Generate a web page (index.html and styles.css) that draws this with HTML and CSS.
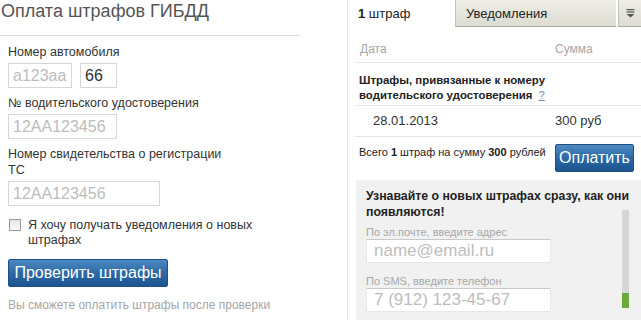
FILE: index.html
```html
<!DOCTYPE html>
<html lang="ru">
<head>
<meta charset="utf-8">
<title>Оплата штрафов ГИБДД</title>
<link rel="stylesheet" href="styles.css">
</head>
<body>
<div class="page">
  <div class="left">
    <h1 class="title">Оплата штрафов ГИБДД</h1>
    <div class="form">
      <div class="field">
        <div class="label">Номер автомобиля</div>
        <div class="inputs">
          <input class="inp inp-num" type="text" placeholder="а123аа">
          <input class="inp inp-reg" type="text" value="66">
        </div>
      </div>
      <div class="field">
        <div class="label">№ водительского удостоверения</div>
        <input class="inp inp-mid" type="text" placeholder="12АА123456">
      </div>
      <div class="field">
        <div class="label label-wrap">Номер свидетельства о регистрации ТС</div>
        <input class="inp inp-wide" type="text" placeholder="12АА123456">
      </div>
      <label class="check">
        <span class="box"></span>
        <span class="check-text">Я хочу получать уведомления о новых штрафах</span>
      </label>
      <button class="btn btn-check" type="button">Проверить штрафы</button>
      <div class="note">Вы сможете оплатить штрафы после проверки</div>
    </div>
  </div>
  <div class="right">
    <div class="tabs">
      <div class="tab tab-active"><b>1</b> штраф</div>
      <div class="tab tab-grey">Уведомления</div>
      <div class="tab tab-menu">
        <svg width="9" height="9" viewBox="0 0 9 9"><rect x="0.5" y="0" width="8" height="1.2" fill="#555"/><rect x="0.5" y="2.4" width="8" height="1.2" fill="#555"/><path d="M0.5 5 L8.5 5 L4.5 8.6 Z" fill="#555"/></svg>
      </div>
    </div>
    <div class="content">
      <div class="thead">
        <span class="c-date">Дата</span>
        <span class="c-sum">Сумма</span>
      </div>
      <div class="section">
        <div class="section-l1">Штрафы, привязанные к номеру</div>
        <div class="section-l2">водительского удостоверения<a class="q" href="#">?</a></div>
      </div>
      <div class="row">
        <span class="c-date c-val">28.01.2013</span>
        <span class="c-sum">300 руб</span>
      </div>
      <div class="total">
        <div class="total-text">Всего <b>1</b> штраф на сумму <b>300</b> рублей</div>
        <button class="btn btn-pay" type="button">Оплатить</button>
      </div>
    </div>
    <div class="notify">
      <div class="notify-title">Узнавайте о новых штрафах сразу, как они появляются!</div>
      <div class="small">По эл.почте, введите адрес</div>
      <input class="inp inp-n" type="text" placeholder="name@email.ru">
      <div class="small small-2">По SMS, введите телефон</div>
      <input class="inp inp-n" type="text" placeholder="7 (912) 123-45-67">
      <div class="scroll"><div class="scroll-thumb"></div></div>
    </div>
  </div>
</div>
</body>
</html>
```
FILE: styles.css
```css
* { box-sizing: border-box; }
html, body { margin: 0; padding: 0; background: #fff; }
body {
  font-family: "Liberation Sans", Arial, sans-serif;
  color: #333;
  width: 641px;
  height: 320px;
  overflow: hidden;
}
.page { display: flex; height: 320px; }
.left { width: 347px; flex: none; }
.title {
  margin: 0;
  width: 300px;
  font-size: 18px;
  font-weight: normal;
  line-height: 22px;
  color: #555;
  padding: 0 0 13px 1px;
  border-bottom: 1px solid #ddd;
}
.form { padding-left: 8px; padding-top: 8px; }
.field { margin-bottom: 7px; }
.label { font-size: 12.5px; line-height: 16px; margin-bottom: 3px; color: #333; }
.label-wrap { width: 228px; }
.inputs { display: flex; gap: 8px; }
.inp {
  display: block;
  height: 25px;
  border: 1px solid #d6d6d6;
  padding: 0 4px;
  font-family: "Liberation Sans", Arial, sans-serif;
  font-size: 16px;
  color: #333;
  background: #fff;
  outline: none;
}
.inp::placeholder { color: #bdbdbd; }
.inp-num { width: 64px; }
.inp-reg { width: 37px; }
.inp-mid { width: 109px; }
.inp-wide { width: 152px; }
.check { display: flex; align-items: flex-start; margin-top: 12px; }
.box {
  flex: none;
  width: 12px; height: 12px;
  border: 1px solid #9a9a9a;
  background: linear-gradient(#e4e4e4, #fafafa);
  margin: 1px 7px 0 1px;
}
.check-text { font-size: 12.5px; line-height: 15px; width: 250px; }
.btn {
  display: block;
  border: 1px solid #1f4f80;
  border-radius: 2px;
  color: #fff;
  font-family: "Liberation Sans", Arial, sans-serif;
  font-size: 16px;
  background: linear-gradient(#4d8ac4, #2d6aa5 50%, #1c5490);
  padding: 0;
}
.btn-check { width: 160px; height: 28px; margin-top: 11px; }
.note { font-size: 12px; line-height: 16px; color: #a6a6a6; margin-top: 10px; }

.right {
  flex: 1;
  border-left: 1px solid #e9e5d6;
  display: flex;
  flex-direction: column;
}
.tabs { display: flex; height: 27px; flex: none; }
.tab { font-size: 13px; line-height: 27px; }
.tab-active { width: 107px; padding-left: 10px; color: #222; }
.tab-grey {
  width: 161px;
  padding-left: 10px;
  background: linear-gradient(#efeee6, #dddcd2);
  border-left: 1px solid #c4c3b8;
  border-bottom: 1px solid #a9a89e;
  color: #222;
}
.tab-menu {
  flex: 1;
  margin-left: 2px;
  background: linear-gradient(#efeee6, #dddcd2);
  border-left: 1px solid #c4c3b8;
  border-bottom: 1px solid #a9a89e;
  display: flex;
  justify-content: center;
  padding-top: 9px;
  line-height: 1;
}
.content { margin-left: 7px; flex: none; }
.thead {
  display: flex;
  font-size: 12px;
  line-height: 16px;
  color: #a6a6a6;
  padding: 14px 0 5px 5px;
  border-bottom: 1px solid #e6e6e6;
}
.c-date { width: 195px; }
.section {
  padding: 10px 0 2px 4px;
  border-bottom: 1px solid #e6e6e6;
  font-size: 11.4px;
  font-weight: bold;
  line-height: 15px;
  color: #222;
}
.section-l1, .section-l2 { white-space: nowrap; }
.q { display: inline-block; color: #6f8fb5; font-weight: normal; margin-left: 6px; }
.row {
  display: flex;
  font-size: 13px;
  line-height: 16px;
  padding: 7px 0 7px 18px;
  border-bottom: 1px solid #e6e6e6;
}
.c-val { width: 182px; }
.total { display: flex; justify-content: space-between; padding: 7px 7px 0 4px; }
.total-text { font-size: 11px; line-height: 14px; color: #222; margin-top: 1px; }
.btn-pay { width: 79px; height: 28px; }
.notify {
  position: relative;
  flex: 1;
  margin: 8px 0 0 8px;
  background: #f1f1f1;
  padding: 8px 0 0 10px;
}
.notify-title { font-size: 12.3px; font-weight: bold; line-height: 16px; color: #222; width: 268px; }
.small { font-size: 11px; line-height: 13px; color: #a8a8a8; margin-top: 6px; }
.small-2 { margin-top: 12px; }
.inp-n {
  width: 185px;
  height: 24px;
  border: 1px solid #e8e8e8;
  border-top-color: #c9c9c9;
  padding: 0 7px;
  font-size: 17px;
}
.scroll {
  position: absolute;
  left: 266px;
  top: 30px;
  width: 7px;
  height: 98px;
  background: #d6d6d6;
}
.scroll-thumb {
  position: absolute;
  left: 0; bottom: 0;
  width: 7px; height: 15px;
  background: #6fa83a;
}
```
